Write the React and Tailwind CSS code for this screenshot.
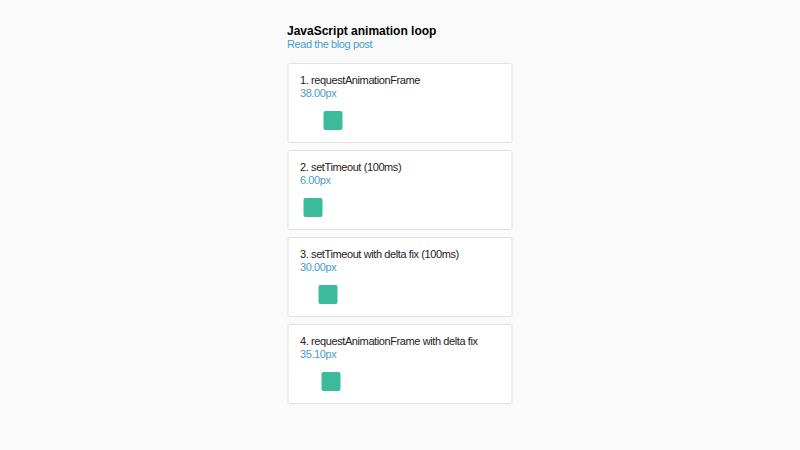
import React from 'react';

const loops = [
  { title: '1. requestAnimationFrame', value: 38.0 },
  { title: '2. setTimeout (100ms)', value: 6.0 },
  { title: '3. setTimeout with delta fix (100ms)', value: 30.0 },
  { title: '4. requestAnimationFrame with delta fix', value: 35.1 },
];

const LoopCard = ({ title, value }) => (
  <div className="bg-white border border-[#e2e2e2] rounded-[2px] px-3 pt-[10px] pb-3">
    <div className="text-[11px] leading-[13px] tracking-[-0.4px] text-[#222]">{title}</div>
    <div className="text-[11px] leading-[13px] tracking-[-0.4px] text-[#4b9ccb]">{value.toFixed(2)}px</div>
    <div className="mt-[11px] h-[19px]">
      {/* position follows the animated value */}
      <div
        className="w-[19px] h-[19px] rounded-[2px] bg-[#3bba9c]"
        style={{ marginLeft: `${value * 0.625}px` }}
      />
    </div>
  </div>
);

const App = () => {
  return (
    <div className="min-h-[450px] bg-[#fafafa] font-['Liberation_Sans',Arial,sans-serif]">
      <div className="w-[225px] mx-auto pt-6 translate-x-[-0.5px]">
        <h1 className="text-[12px] leading-[14px] font-bold text-black">JavaScript animation loop</h1>
        <a href="#" className="block text-[11px] leading-[12px] tracking-[-0.4px] text-[#4b9ccb]">Read the blog post</a>
        <div className="mt-[13px] flex flex-col gap-[7px]">
          {loops.map((loop) => (
            <LoopCard key={loop.title} {...loop} />
          ))}
        </div>
      </div>
    </div>
  );
};

export default App;
